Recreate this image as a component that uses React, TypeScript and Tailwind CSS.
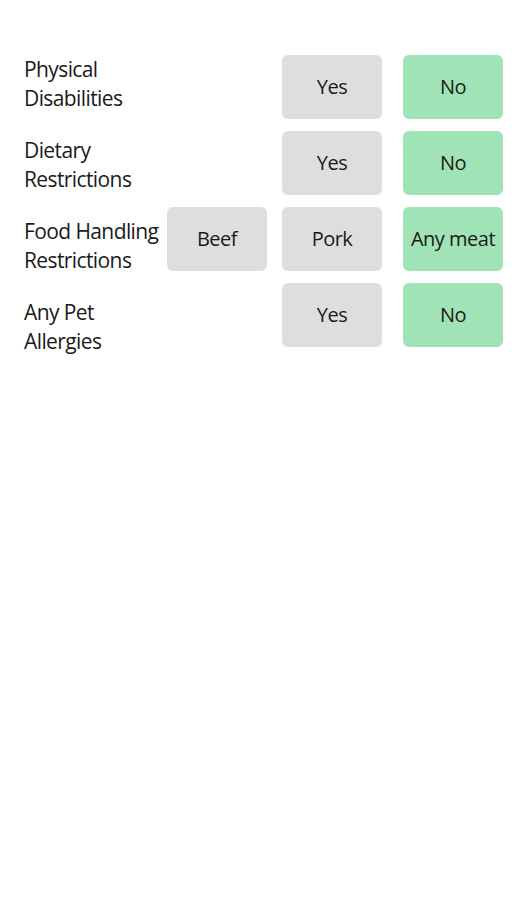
const rows = [
  { label: ["Physical", "Disabilities"], options: [null, "Yes", "No"] },
  { label: ["Dietary", "Restrictions"], options: [null, "Yes", "No"] },
  { label: ["Food Handling", "Restrictions"], options: ["Beef", "Pork", "Any meat"] },
  { label: ["Any Pet", "Allergies"], options: [null, "Yes", "No"] },
];

export default function App() {
  return (
    <div className="min-h-[900px] w-[519px] bg-white font-['Open_Sans',sans-serif] text-[#1a1a1a]">
      <div className="flex pt-[55px]">
        {/* labels stack on their own rhythm, a bit looser than the buttons */}
        <div className="flex flex-col gap-[23px] pl-6">
          {rows.map((r) => (
            <div key={r.label[0]} className="text-[21px] leading-[29px] tracking-[-0.6px]">
              <div>{r.label[0]}</div>
              <div>{r.label[1]}</div>
            </div>
          ))}
        </div>
        <div className="ml-auto mr-4 flex flex-col gap-3">
          {rows.map((r) => (
            <div key={r.label[0]} className="flex">
              {r.options.map((o, i) => (
                <div
                  key={i}
                  className={`${i === 1 ? "ml-[15px]" : ""} ${i === 2 ? "ml-[21px]" : ""} h-[64px] w-[100px]`}
                >
                  {o && (
                    <div
                      className={`flex h-full items-center justify-center rounded-md text-[20px] tracking-[-0.5px] ${
                        i === 2 ? "bg-[#a0e3b6]" : "bg-[#dedede]"
                      }`}
                    >
                      {o}
                    </div>
                  )}
                </div>
              ))}
            </div>
          ))}
        </div>
      </div>
    </div>
  );
}
